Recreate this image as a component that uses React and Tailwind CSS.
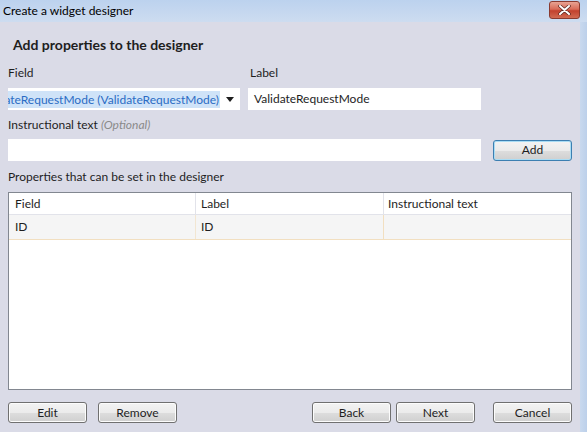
import React from "react";

const font = { fontFamily: "Lato, 'Noto Sans', sans-serif" };

function WinButton({ children, className = "", focused = false }) {
  return (
    <button
      className={
        "h-[21px] w-[79px] rounded-[3px] border text-[12px] text-[#1e1e1e] bg-[linear-gradient(#f3f3f3_0%,#ebebeb_50%,#dddddd_51%,#cfcfcf_100%)] " +
        (focused
          ? "border-[#3c7fb1] shadow-[inset_0_0_0_1px_#a9dcf4]"
          : "border-[#707070] shadow-[inset_0_0_0_1px_#fcfcfc]") +
        " " +
        className
      }
    >
      {children}
    </button>
  );
}

export default function App() {
  return (
    <div
      className="w-[587px] h-[432px] flex flex-col bg-[#dadbe7] overflow-hidden text-[12px] text-[#1e1e1e]"
      style={font}
    >
      {/* title bar */}
      <div className="h-[22px] shrink-0 flex items-center justify-between pl-[3px] pr-[7px] bg-[linear-gradient(#bcd2ee,#cddcf0)]">
        <span className="text-[12px] text-black">Create a widget designer</span>
        <div className="w-[31px] h-[18px] -mt-[3px] rounded-[3px] border border-[#8a3a30] flex items-center justify-center bg-[linear-gradient(#e8a393_0%,#d96b58_45%,#c2412e_55%,#d16a52_100%)]">
          <svg width="13" height="10" viewBox="0 0 13 10">
            <path d="M2 1 L11 9 M11 1 L2 9" stroke="#5a2620" strokeWidth="3.4" strokeLinecap="round" />
            <path d="M2 1 L11 9 M11 1 L2 9" stroke="#ffffff" strokeWidth="2" strokeLinecap="round" />
          </svg>
        </div>
      </div>

      <div className="flex-1 flex">
        {/* content */}
        <div className="flex-1 flex flex-col pl-[8px] pr-[8px]">
          <div className="mt-[13px] ml-[5px] leading-[20px] text-[14px] font-bold text-[#1e1e1e]">
            Add properties to the designer
          </div>

          <div className="mt-[10px] flex leading-[16px]">
            <div className="w-[240px]">Field</div>
            <div className="pl-[2px]">Label</div>
          </div>

          <div className="mt-[7px] flex gap-[8px]">
            <div className="w-[232px] h-[22px] bg-white flex items-center">
              <div className="flex-1 overflow-hidden flex justify-end">
                <span className="shrink-0 whitespace-nowrap bg-[#cfe3f8] text-[#2b6cc4] px-[1px] leading-[17px]">
                  ValidateRequestMode (ValidateRequestMode)
                </span>
              </div>
              <div className="w-[20px] flex justify-center">
                <svg width="8" height="5" viewBox="0 0 8 5">
                  <path d="M0 0 H8 L4 5 Z" fill="#1e1e1e" />
                </svg>
              </div>
            </div>
            <div className="w-[233px] h-[22px] bg-white flex items-center pl-[6px]">
              ValidateRequestMode
            </div>
          </div>

          <div className="mt-[7px] leading-[16px]">
            Instructional text <span className="italic text-[#8a8a8a]">(Optional)</span>
          </div>

          <div className="mt-[6px] flex items-center gap-[12px]">
            <div className="w-[473px] h-[22px] bg-white" />
            <WinButton focused className="w-[78px]">Add</WinButton>
          </div>

          <div className="mt-[8px] leading-[16px]">Properties that can be set in the designer</div>

          {/* table */}
          <div className="mt-[7px] h-[198px] bg-white border border-[#828790] flex flex-col">
            <div className="h-[22px] flex border-b border-[#e2e3ea]">
              <div className="w-[187px] border-r border-[#e2e3ea] pl-[6px] flex items-center">Field</div>
              <div className="w-[188px] border-r border-[#e2e3ea] pl-[5px] flex items-center">Label</div>
              <div className="flex-1 pl-[4px] flex items-center">Instructional text</div>
            </div>
            <div className="h-[25px] flex bg-[#f5f5f5] border-b border-[#f2dfc0]">
              <div className="w-[187px] border-r border-[#f2e6d2] pl-[6px] flex items-center">ID</div>
              <div className="w-[188px] border-r border-[#f2dfc0] pl-[5px] flex items-center">ID</div>
              <div className="flex-1" />
            </div>
          </div>

          {/* bottom buttons */}
          <div className="mt-[12px] flex">
            <WinButton>Edit</WinButton>
            <WinButton className="ml-[11px]">Remove</WinButton>
            <div className="flex-1" />
            <WinButton>Back</WinButton>
            <WinButton className="ml-[5px]">Next</WinButton>
            <WinButton className="ml-[18px]">Cancel</WinButton>
          </div>
        </div>

        {/* right frame edge */}
        <div className="w-[8px] bg-[linear-gradient(90deg,#c9d9ee,#bcd0ea)]" />
      </div>
    </div>
  );
}
